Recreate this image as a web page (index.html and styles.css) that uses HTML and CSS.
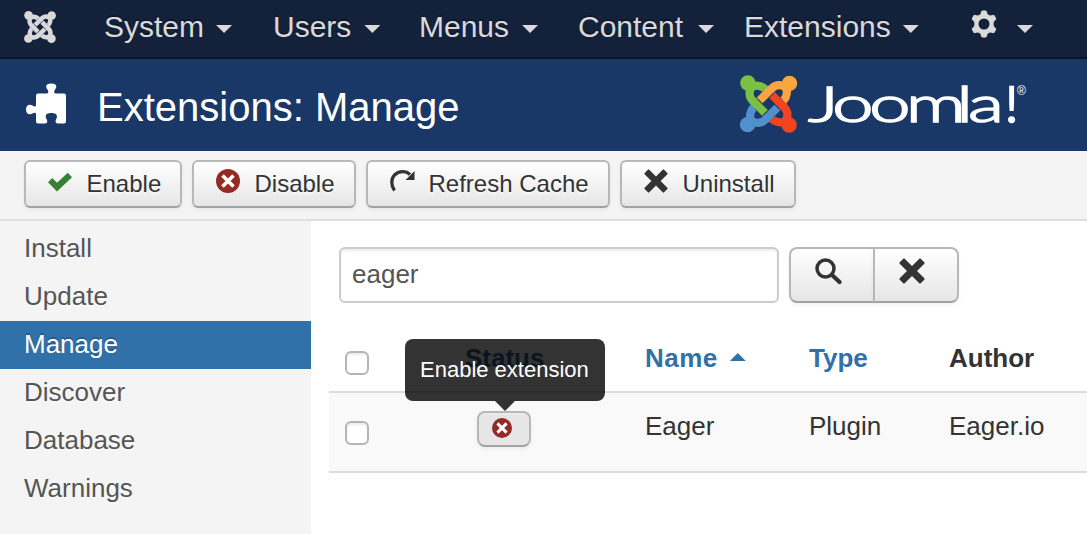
FILE: index.html
```html
<!DOCTYPE html>
<html lang="en">
<head>
<meta charset="utf-8">
<title>Extensions: Manage</title>
<link rel="stylesheet" href="styles.css">
</head>
<body>
<svg class="defs" aria-hidden="true">
  <symbol id="knot" viewBox="14 14 174 176">
    <g class="arm green"><circle cx="38" cy="38" r="23.500"/><path class="neck" d="M38 38L54 54"/><path d="M92 57C77 44 59 43 50 51C41 60 40 79 53 92L60 98"/></g>
    <g class="arm orange" transform="rotate(90 101 102)"><circle cx="38" cy="38" r="23.500"/><path class="neck" d="M38 38L54 54"/><path d="M92 57C77 44 59 43 50 51C41 60 40 79 53 92L60 98"/></g>
    <g class="arm red" transform="rotate(180 101 102)"><circle cx="38" cy="38" r="23.500"/><path class="neck" d="M38 38L54 54"/><path d="M92 57C77 44 59 43 50 51C41 60 40 79 53 92L60 98"/></g>
    <g class="arm blue" transform="rotate(270 101 102)"><circle cx="38" cy="38" r="23.500"/><path class="neck" d="M38 38L54 54"/><path d="M92 57C77 44 59 43 50 51C41 60 40 79 53 92L60 98"/></g>
    <g class="gap"><path d="M68 106L92 130"/><path d="M68 106L92 130" transform="rotate(90 101 102)"/><path d="M68 106L92 130" transform="rotate(180 101 102)"/><path d="M68 106L92 130" transform="rotate(270 101 102)"/></g>
    <path class="arm green" d="M53 92L90 129"/>
    <path class="arm orange" d="M53 92L90 129" transform="rotate(90 101 102)"/>
    <path class="arm red" d="M53 92L90 129" transform="rotate(180 101 102)"/>
    <path class="arm blue" d="M53 92L90 129" transform="rotate(270 101 102)"/>
  </symbol>
  <symbol id="cross" viewBox="0 0 26 26"><path d="M4.300.7Q5 0 5.700.7L13 8L20.300.7Q21 0 21.700.7L25.300 4.300Q26 5 25.300 5.700L18 13L25.300 20.300Q26 21 25.300 21.700L21.700 25.300Q21 26 20.300 25.300L13 18L5.700 25.300Q5 26 4.300 25.300L.7 21.700Q0 21 .7 20.300L8 13L.7 5.700Q0 5 .7 4.300Z"/></symbol>
  <symbol id="cancel" viewBox="0 0 24 24"><circle cx="12" cy="12" r="12" fill="#942a25"/><path d="M6.500 6.500L17.500 17.500M17.500 6.500L6.500 17.500" stroke="#fff" stroke-width="3.600"/></symbol>
</svg>

<nav class="topbar">
  <svg class="brand"><use href="#knot"/></svg>
  <a class="menu system">System<i class="caret"></i></a>
  <a class="menu users">Users<i class="caret"></i></a>
  <a class="menu menus">Menus<i class="caret"></i></a>
  <a class="menu content-menu">Content<i class="caret"></i></a>
  <a class="menu extensions">Extensions<i class="caret"></i></a>
  <a class="menu settings"><svg class="gear" viewBox="0 0 26 28"><path fill-rule="evenodd" d="M10.200 1.500Q10.500.5 11.500.5H14.500Q15.500.5 15.800 1.500L16.600 4.300L19 5.600L22 4.900Q23 4.700 23.500 5.500L25 8Q25.500 9 24.800 9.700L22.700 12V16L24.800 18.300Q25.500 19 25 20L23.500 22.500Q23 23.300 22 23.100L19 22.400L16.600 23.700L15.800 26.500Q15.500 27.500 14.500 27.500H11.500Q10.500 27.500 10.200 26.500L9.400 23.700L7 22.400L4 23.100Q3 23.300 2.500 22.500L1 20Q.5 19 1.200 18.300L3.300 16V12L1.200 9.700Q.5 9 1 8L2.500 5.500Q3 4.700 4 4.900L7 5.600L9.400 4.300ZM13 8.500A5.500 5.500 0 1 0 13 19.500A5.500 5.500 0 1 0 13 8.500Z"/></svg><i class="caret"></i></a>
</nav>

<header class="header">
  <svg class="puzzle" viewBox="0 0 40 41"><path d="M12 10.500H21Q22.500 10.500 22.300 8.500C22.200 7 20.200 5.500 20.200 3.500C20.200 1.500 22 .5 25.300 .5S30.300 1.500 30.300 3.500C30.300 5.500 28.300 7 28.200 8.500Q28 10.500 29.500 10.500H38Q40 10.500 40 12.500V38.500Q40 40.500 38 40.500H32Q29.500 40.500 29.500 38.500C29.500 36.500 31 35.500 31 33.500C31 31 28.500 30 25.300 30S19.700 31 19.700 33.500C19.700 35.500 21.300 36.500 21.300 38.500Q21.300 40.500 19 40.500H12Q10 40.500 10 38.500V31C10 29 8 29.500 6.500 30.500C3 32.500 0 30.500 0 26.500S3 20.500 6.500 22.500C8 23.500 10 24 10 22V12.500Q10 10.500 12 10.500Z"/></svg>
  <h1>Extensions: Manage</h1>
  <div class="logo">
    <svg class="logo-mark"><use href="#knot"/></svg>
    <svg class="wordmark" viewBox="0 0 222 58">
      <text transform="translate(0 47) scale(1.480 1)" x="1.300 17.800 42.800 67.500 101.700 109.500">Joomla</text>
      <text class="bang" x="205.500" y="47">!</text>
      <text class="reg" x="211" y="20">®</text>
    </svg>
  </div>
</header>

<div class="toolbar">
  <button class="btn enable"><svg class="icon" viewBox="0 0 24 24"><path fill="#378137" d="M0 9.300L4.300 5L9 9.700L19.800 -.3L24 4.200L9 18.500Z" transform="translate(0 3)"/></svg>Enable</button>
  <button class="btn disable"><svg class="icon"><use href="#cancel"/></svg>Disable</button>
  <button class="btn refresh"><svg class="icon" viewBox="0 0 24 24"><path fill="none" stroke="#333" stroke-width="3.300" d="M4.500 21.500C1 17 .8 10 4.500 6C9 1.500 16 1.600 20 5.500"/><path d="M24.500 2V11H15.500Z"/></svg>Refresh Cache</button>
  <button class="btn uninstall"><svg class="icon"><use href="#cross"/></svg>Uninstall</button>
</div>

<div class="page">
  <aside class="sidebar">
    <a>Install</a><a>Update</a><a class="active">Manage</a><a>Discover</a><a>Database</a><a>Warnings</a>
  </aside>
  <main class="content">
    <div class="search">
      <input type="text" value="eager">
      <div class="group">
        <button class="btn"><svg class="find" viewBox="0 0 27 27"><circle cx="10.500" cy="10.500" r="8.500" fill="none" stroke="#333" stroke-width="3.500"/><path d="M17 17L24.500 24" stroke="#333" stroke-width="4.200" stroke-linecap="round"/></svg></button>
        <button class="btn"><svg class="clear"><use href="#cross"/></svg></button>
      </div>
    </div>
    <div class="table">
      <div class="row head">
        <span class="check"></span><a class="status-title">Status</a><a class="name-title">Name<i class="sort"></i></a><a>Type</a><b>Author</b>
      </div>
      <div class="row body">
        <span class="check"></span>
        <div class="state"><button class="btn micro"><svg><use href="#cancel"/></svg></button><div class="tooltip">Enable extension</div></div>
        <span>Eager</span><span>Plugin</span><span>Eager.io</span>
      </div>
    </div>
  </main>
</div>
</body>
</html>
```

FILE: styles.css
```css
* { box-sizing: border-box; }
body { margin: 0; width: 1087px; height: 534px; overflow: hidden; background: #fff; color: #333; font: 26px/36px "Liberation Sans", Arial, sans-serif; }
svg { display: block; flex: none; }
.defs { position: absolute; width: 0; height: 0; }

.arm { fill: none; stroke: var(--c); stroke-width: 25; }
.arm circle { fill: var(--c); stroke: none; }
.arm .neck { stroke-width: 34; }
.gap { fill: none; stroke: var(--paper, #1a3867); stroke-width: 28; }
.green { --c: var(--ink, #7ac143); }
.orange { --c: var(--ink, #f9a541); }
.red { --c: var(--ink, #f44321); }
.blue { --c: var(--ink, #5091cd); }

.topbar { display: flex; height: 59px; padding-left: 24px; background: #13213b; border-bottom: 2px solid #0b1528; }
.brand { --ink: #d9d9d9; --paper: #13213b; width: 32px; height: 32px; margin-top: 11px; }
.menu { display: flex; align-items: center; height: 54px; font-size: 30px; color: #d9d9d9; text-shadow: 0 -2px 0 rgba(0,0,0,.25); }
.caret { width: 16px; height: 8px; margin: 4px 0 0 12px; background: #d9d9d9; clip-path: polygon(0 0, 100% 0, 50% 100%); }
.system { width: 169px; margin-left: 48px; }
.users { width: 146px; }
.users .caret { margin-left: 13px; }
.menus { width: 159px; }
.menus .caret { margin-left: 13px; }
.content-menu { width: 166px; }
.content-menu .caret { margin-left: 15px; }
.extensions { width: 227px; }
.gear { width: 26px; height: 28px; margin-top: -6px; fill: #d9d9d9; }
.settings .caret { margin-left: 20px; }

.header { display: flex; height: 92px; padding-left: 26px; background: #1a3867; }
.puzzle { width: 40px; height: 41px; margin-top: 24px; fill: #fff; }
h1 { width: 643px; margin: 28px 0 0 31px; color: #fff; font-size: 40px; font-weight: 400; line-height: 40px; white-space: nowrap; }
.logo { display: flex; margin-top: 16px; }
.logo-mark { width: 57px; height: 58px; }
.wordmark { width: 222px; height: 58px; margin-left: 9px; overflow: visible; fill: #fff; font: 300 50px Lato, sans-serif; stroke: #fff; stroke-width: 1.6px; }
.wordmark .bang { text-anchor: middle; stroke-width: 2.5px; }
.wordmark .reg { font: 12px "Liberation Sans", sans-serif; stroke: none; }

.toolbar { display: flex; gap: 10px; height: 70px; padding: 9px 24px; background: #f4f4f4; border-bottom: 2px solid #dfdfdf; }
.btn { display: flex; align-items: flex-start; height: 48px; margin: 0; padding: 8px 0 0 22px; border: 2px solid #b8b8b8; border-bottom-color: #a2a2a2; border-radius: 6px; background: linear-gradient(#fff, #e6e6e6); box-shadow: inset 0 2px 0 rgba(255,255,255,.2), 0 2px 4px rgba(0,0,0,.05); color: #333; font: 24px/28px "Liberation Sans", Arial, sans-serif; text-shadow: 0 2px 2px rgba(255,255,255,.75); white-space: nowrap; }
.icon { width: 24px; height: 24px; margin: -1px 14.5px 0 0; overflow: visible; fill: #333; }
.enable { width: 158px; }
.enable .icon { margin-top: 0; }
.disable { width: 164px; }
.refresh { width: 244px; }
.uninstall { width: 176px; }

.page { display: flex; height: 313px; }
.sidebar { width: 311px; padding-top: 4px; background: #f4f4f4; }
.sidebar a { display: block; height: 48px; padding: 5px 24px; color: #555; text-shadow: 0 2px 0 rgba(255,255,255,.5); }
.sidebar .active { background: #3071a9; color: #fff; text-shadow: 0 -2px 0 rgba(0,0,0,.2); }
.content { flex: 1; padding: 26px 0 0 18px; }
.search { display: flex; gap: 10px; padding-left: 10px; }
input { width: 440px; height: 56px; padding: 0 11px 2px; border: 2px solid #ccc; border-radius: 6px; color: #555; background: #fff; box-shadow: inset 0 2px 2px rgba(0,0,0,.075); font: 26px "Liberation Sans", Arial, sans-serif; }
.group { display: flex; }
.group .btn { width: 86px; height: 56px; padding: 9px 0 0 24px; border-radius: 8px 0 0 8px; }
.group .btn + .btn { margin-left: -2px; border-radius: 0 8px 8px 0; }
.find, .clear { width: 27px; height: 27px; fill: #333; }
.clear { width: 26px; height: 26px; }

.table { margin-top: 16px; }
.row { display: grid; grid-template-columns: 132px 168px 164px 140px 1fr; height: 74px; padding-left: 16px; border-bottom: 2px solid #ddd; white-space: nowrap; }
.check { width: 24px; height: 24px; border: 2px solid #b5b5b5; border-radius: 6px; background: #fff; box-shadow: inset 0 2px 2px rgba(0,0,0,.08); }
.head { padding-top: 21px; font-weight: 700; }
.head .check { margin-top: 11px; }
.head a { color: #3071a9; }
.head .status-title { margin-left: -12px; }
.name-title { letter-spacing: .5px; }
.sort { display: inline-block; width: 16px; height: 8px; margin: 0 0 6px 12px; background: #3071a9; clip-path: polygon(50% 0, 100% 100%, 0 100%); }
.body { height: 80px; padding-top: 15px; background: #f9f9f9; }
.body .check { margin-top: 13px; }
.state { position: relative; padding-top: 3px; }
.micro { width: 54px; height: 36px; padding: 5px 0 0 13px; border-radius: 8px; background: #e6e6e6; }
.micro svg { width: 20px; height: 20px; }
.tooltip { position: absolute; left: -72px; top: -69px; width: 200px; height: 62px; padding: 13px 15px; border-radius: 8px; background: rgba(0,0,0,.8); color: #fff; font-size: 22px; }
.tooltip::after { content: ""; position: absolute; left: 90px; top: 62px; width: 20px; height: 10px; background: rgba(0,0,0,.8); clip-path: polygon(0 0, 100% 0, 50% 100%); }
```
